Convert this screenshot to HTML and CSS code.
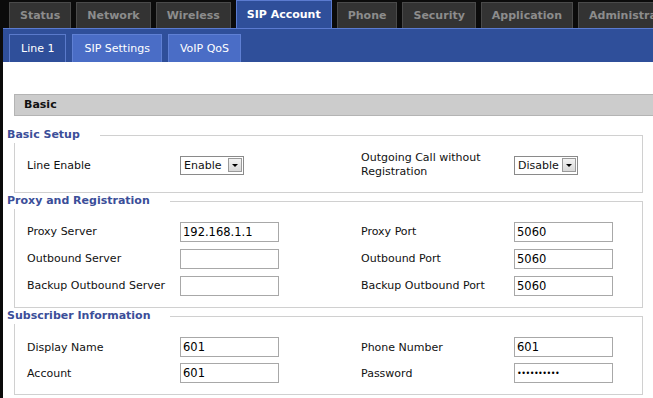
FILE: index.html
```html
<!DOCTYPE html>
<html lang="en">
<head>
  <meta charset="UTF-8">
  <title>SIP Account</title>
  <link rel="stylesheet" href="styles.css">
</head>
<body>
  <div class="menu">
    <a class="tab">Status</a>
    <a class="tab">Network</a>
    <a class="tab">Wireless</a>
    <a class="tab active">SIP Account</a>
    <a class="tab">Phone</a>
    <a class="tab">Security</a>
    <a class="tab">Application</a>
    <a class="tab">Administration</a>
  </div>

  <div class="submenu">
    <a class="subtab current">Line 1</a>
    <a class="subtab">SIP Settings</a>
    <a class="subtab">VoIP QoS</a>
  </div>

  <div class="content">
    <div class="section-title">Basic</div>

    <fieldset class="first">
      <legend>Basic Setup</legend>
      <div class="grid one">
        <label>Line Enable</label>
        <div class="select"><span>Enable</span><i></i></div>
        <label class="two-line">Outgoing Call without Registration</label>
        <div class="select"><span>Disable</span><i></i></div>
      </div>
    </fieldset>

    <fieldset>
      <legend>Proxy and Registration</legend>
      <div class="grid">
        <label>Proxy Server</label>
        <input type="text" value="192.168.1.1">
        <label>Proxy Port</label>
        <input type="text" value="5060">

        <label>Outbound Server</label>
        <input type="text" value="">
        <label>Outbound Port</label>
        <input type="text" value="5060">

        <label>Backup Outbound Server</label>
        <input type="text" value="">
        <label>Backup Outbound Port</label>
        <input type="text" value="5060">
      </div>
    </fieldset>

    <fieldset>
      <legend>Subscriber Information</legend>
      <div class="grid sub">
        <label>Display Name</label>
        <input type="text" value="601">
        <label>Phone Number</label>
        <input type="text" value="601">

        <label>Account</label>
        <input type="text" value="601">
        <label>Password</label>
        <input type="password" class="pass" value="0123456789">
      </div>
    </fieldset>
  </div>
</body>
</html>
```

FILE: styles.css
```css
html {
  height: 398px;
  overflow: hidden;
}

body {
  margin: 0;
  height: 398px;
  background: #0b0b0b;
  font-family: 'DejaVu Sans', Tahoma, sans-serif;
  font-size: 11px;
  color: #111;
  overflow: hidden;
  padding-left: 3px;
}

.menu {
  display: flex;
  gap: 5px;
  height: 28px;
  padding-left: 6px;
  align-items: flex-end;
  white-space: nowrap;
  overflow: hidden;
}

.tab {
  height: 25px;
  line-height: 25px;
  padding: 0 10px;
  background: #333333;
  border: 1px solid #4a4a4a;
  border-bottom: none;
  color: #8c8c8c;
  font-weight: bold;
  font-size: 11px;
  flex: none;
}

.tab.active {
  height: 28px;
  line-height: 28px;
  background: #2f4f9a;
  border-color: #5b7bd0;
  color: #ffffff;
  margin-bottom: -1px;
  position: relative;
}

.submenu {
  background: #2f4f9a;
  border-top: 1px solid #5b7bd0;
  height: 34px;
  padding: 5px 0 0 6px;
  box-sizing: border-box;
  display: flex;
  gap: 6px;
}

.subtab {
  height: 28px;
  line-height: 27px;
  padding: 0 11px;
  background: #4a6dc6;
  border: 1px solid #5f80d4;
  border-bottom: none;
  color: #ffffff;
  font-size: 11px;
  box-sizing: border-box;
}

.subtab.current {
  background: #2f4f9a;
  border-color: #5a7acb;
}

.content {
  background: #ffffff;
  padding: 32px 0 0 4px;
  height: 340px;
}

.section-title {
  margin-left: 7px;
  height: 20px;
  line-height: 20px;
  background: #cccccc;
  border: 1px solid #b4b4b4;
  border-right: none;
  padding-left: 9px;
  font-weight: bold;
  color: #111;
}

fieldset {
  margin: 0 10px 0 7px;
  border: 1px solid #d0d0d0;
  padding: 0 0 8px 0;
}

fieldset.first {
  margin-top: 11px;
  padding-bottom: 9px;
}

legend {
  margin-left: -8px;
  padding: 0 20px 0 0;
  line-height: 16px;
  color: #3b4e99;
  font-weight: bold;
}

.grid {
  display: grid;
  grid-template-columns: 153px 181px 153px 100px;
  grid-auto-rows: 27px;
  align-items: center;
  padding: 9px 0 0 12px;
}

.grid.one {
  grid-auto-rows: 36px;
  padding-top: 4px;
}

.grid.sub {
  grid-auto-rows: 26px;
  padding-top: 10px;
}

.grid label {
  color: #111;
}

.two-line {
  width: 140px;
  line-height: 14px;
}

input {
  width: 99px;
  height: 20px;
  box-sizing: border-box;
  border: 1px solid #a8a8a8;
  padding: 0 2px;
  font-family: 'DejaVu Sans', Tahoma, sans-serif;
  font-size: 11.5px;
  color: #000;
  margin: 0;
}

input.pass {
  font-size: 8px;
  letter-spacing: -0.5px;
}

.select {
  width: 64px;
  height: 19px;
  box-sizing: border-box;
  border: 1px solid #8a8a8a;
  display: flex;
  align-items: center;
  justify-content: space-between;
  padding: 0 1px 0 3px;
}

.select i {
  width: 14px;
  height: 14px;
  box-sizing: border-box;
  border: 1px solid #9a9a9a;
  background: linear-gradient(#f2f2f2, #d8d8d8);
  position: relative;
}

.select i::after {
  content: "";
  position: absolute;
  left: 3px;
  top: 5px;
  border-left: 3px solid transparent;
  border-right: 3px solid transparent;
  border-top: 3px solid #000;
}
```
